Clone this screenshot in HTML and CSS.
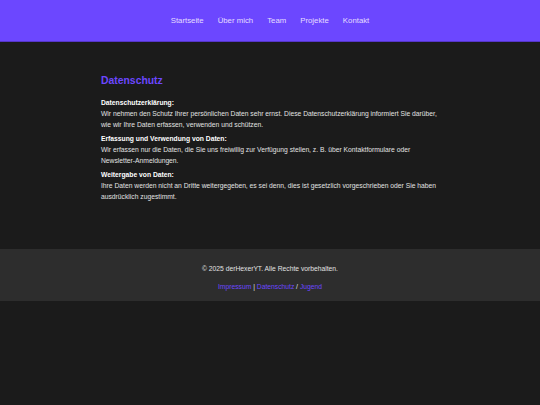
FILE: index.html
```
<!DOCTYPE html>
<html lang="de">
<head>
<meta charset="utf-8">
<title>Datenschutz</title>
<link rel="stylesheet" href="styles.css">
</head>
<body>
<header class="site-header">
  <nav class="nav">
    <a href="#">Startseite</a>
    <a href="#">Über mich</a>
    <a href="#">Team</a>
    <a href="#">Projekte</a>
    <a href="#">Kontakt</a>
  </nav>
</header>
<main class="content">
  <h1 class="title">Datenschutz</h1>
  <p class="para"><strong>Datenschutzerklärung:</strong><br>Wir nehmen den Schutz Ihrer persönlichen Daten sehr ernst. Diese Datenschutzerklärung informiert Sie darüber, wie wir Ihre Daten erfassen, verwenden und schützen.</p>
  <p class="para"><strong>Erfassung und Verwendung von Daten:</strong><br>Wir erfassen nur die Daten, die Sie uns freiwillig zur Verfügung stellen, z. B. über Kontaktformulare oder Newsletter-Anmeldungen.</p>
  <p class="para"><strong>Weitergabe von Daten:</strong><br>Ihre Daten werden nicht an Dritte weitergegeben, es sei denn, dies ist gesetzlich vorgeschrieben oder Sie haben ausdrücklich zugestimmt.</p>
</main>
<footer class="site-footer">
  <p class="copy">© 2025 derHexerYT. Alle Rechte vorbehalten.</p>
  <p class="links"><a href="#">Impressum</a> | <a href="#">Datenschutz</a> / <a href="#">Jugend</a></p>
</footer>
</body>
</html>
```
FILE: styles.css
```
html, body {
  margin: 0;
  padding: 0;
}
body {
  background: #1b1b1b;
  color: #e2e2e2;
  font-family: "Liberation Sans", Arial, sans-serif;
  font-size: 6.74px;
}
.site-header {
  background: #6c47ff;
  height: 41px;
  border-bottom: 1px solid #5636c9;
  display: flex;
  align-items: center;
  justify-content: center;
}
.nav {
  display: flex;
  gap: 14px;
  font-size: 7.8px;
}
.nav a {
  color: #e4ddff;
  text-decoration: none;
}
.content {
  width: 338px;
  margin: 0 auto;
  padding: 33px 0 44px;
}
.title {
  color: #6c47ff;
  font-size: 10.4px;
  margin: 0 0 11px;
}
.para {
  margin: 0 0 3px;
  line-height: 11px;
}
.para strong {
  color: #ffffff;
}
.site-footer {
  background: #2d2d2d;
  text-align: center;
  padding: 15px 0 9px;
}
.copy {
  margin: 0 0 8px;
  line-height: 10px;
}
.links {
  margin: 0;
  line-height: 10px;
}
.links a {
  color: #6c47ff;
  text-decoration: none;
}
```
